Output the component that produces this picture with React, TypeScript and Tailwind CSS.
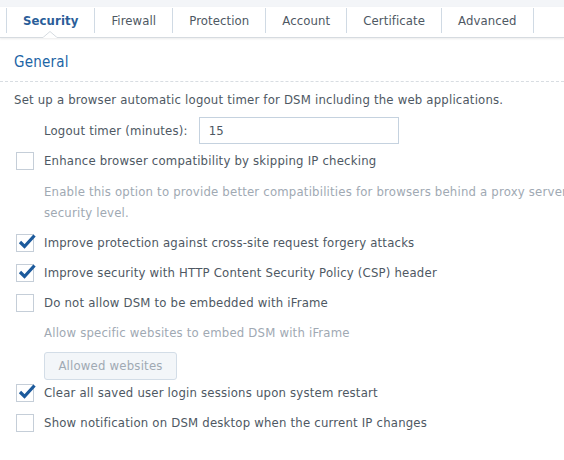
import React from "react";

const font = { fontFamily: '"DejaVu Sans Condensed", "DejaVu Sans", sans-serif' };

function Box({ checked }: { checked?: boolean }) {
  return (
    <div className="relative w-[18px] h-[18px] border border-[#c5ced8] bg-white shrink-0">
      {checked && (
        <svg className="absolute left-[1px] top-[-2px]" width="19" height="17" viewBox="0 0 19 17">
          <path d="M2 9 L6.5 13.5 L16.5 2.5" fill="none" stroke="#1c5a9c" strokeWidth="3.2" strokeLinejoin="miter" />
        </svg>
      )}
    </div>
  );
}

function Row({ checked, children }: { checked?: boolean; children: React.ReactNode }) {
  return (
    <div className="flex items-center h-[30px] pl-[16px]">
      <Box checked={checked} />
      <span className="ml-[10px] whitespace-nowrap">{children}</span>
    </div>
  );
}

export default function App() {
  const tabs = ["Security", "Firewall", "Protection", "Account", "Certificate", "Advanced"];
  return (
    <div className="w-[564px] h-[460px] bg-white overflow-hidden text-[13px] text-[#4e5863]" style={font}>
      <div className="h-[7px] bg-[#f3f5f8]" />
      <div className="relative h-[31px] bg-white border-b border-[#d6dbe0] shadow-[0_1px_2px_rgba(0,0,0,0.08)] pl-[6px] flex items-start">
        {tabs.map((t, i) => (
          <div key={t} className={`h-[25px] mt-[1px] flex items-center border-r border-[#d0dae4] ${i === 0 ? "border-l" : ""} px-[16px] tracking-[0.1px]`}>
            <span className={i === 0 ? "font-bold text-[#2a5d99]" : "text-[#4e5863]"}>{t}</span>
          </div>
        ))}
        <svg className="absolute left-[43px] bottom-[-1px]" width="14" height="7" viewBox="0 0 14 7">
          <path d="M0 6.5 L7 0.5 L14 6.5" fill="white" stroke="#d6dbe0" strokeWidth="1" />
          <rect x="0.5" y="6" width="13" height="2" fill="white" />
        </svg>
      </div>
      <div className="tracking-[0.2px]">
        <div className="px-[14px] pt-[13px] pb-[7px] text-[15px] text-[#1d65a6] border-b border-dashed border-[#d8dde2]">
          General
        </div>
        <div className="pt-[8px] pl-[14px] whitespace-nowrap">Set up a browser automatic logout timer for DSM including the web applications.</div>
        <div className="flex items-center mt-[8px] pl-[44px]">
          <span>Logout timer (minutes):</span>
          <div className="ml-[11px] w-[200px] h-[27px] border border-[#c5d2df] flex items-center pl-[9px]">15</div>
        </div>
        <div className="mt-[2px]">
          <Row>Enhance browser compatibility by skipping IP checking</Row>
        </div>
        <div className="pl-[44px] pt-[5px] text-[#a0a9b3] leading-[21px] whitespace-nowrap">
          <div>Enable this option to provide better compatibilities for browsers behind a proxy server</div>
          <div>security level.</div>
        </div>
        <div className="mt-[5px]">
          <Row checked>Improve protection against cross-site request forgery attacks</Row>
          <Row checked>Improve security with HTTP Content Security Policy (CSP) header</Row>
          <Row>Do not allow DSM to be embedded with iFrame</Row>
        </div>
        <div className="pl-[44px] h-[30px] flex items-center text-[#a0a9b3]">Allow specific websites to embed DSM with iFrame</div>
        <div className="pl-[44px] mt-[4px]">
          <div className="w-[133px] h-[28px] border border-[#d3dde7] rounded-[3px] bg-[#f3f6f9] text-[#a0a9b3] flex items-center justify-center">Allowed websites</div>
        </div>
        <div className="mt-[-2px]">
          <Row checked>Clear all saved user login sessions upon system restart</Row>
          <Row>Show notification on DSM desktop when the current IP changes</Row>
        </div>
      </div>
    </div>
  );
}
